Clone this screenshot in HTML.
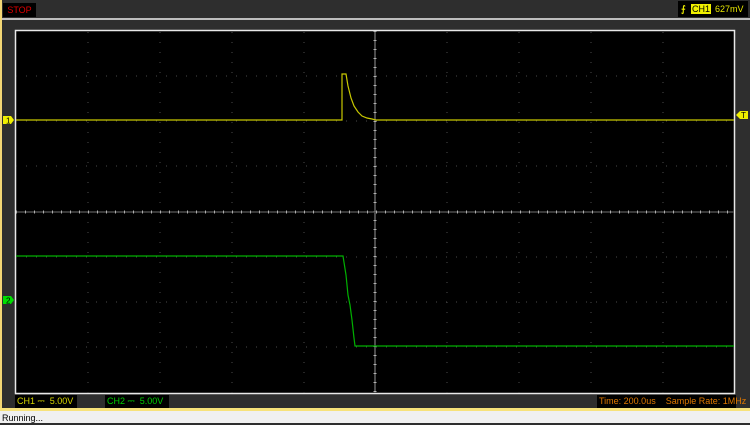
<!DOCTYPE html>
<html><head><style>
body{margin:0;width:750px;height:423px;overflow:hidden;background:#2e2e2e;font-family:"Liberation Sans",sans-serif;position:relative}
.a{position:absolute}
</style></head><body>
<div class="a" style="left:0;top:0;width:2px;height:411px;background:#f3d774"></div>
<div class="a" style="left:3px;top:3px;width:33px;height:14px;background:#000;color:#e00000;font-size:9px;line-height:14px;text-align:center">STOP</div>
<div class="a" style="left:2px;top:18px;width:748px;height:2px;background:#bdbdbd"></div>
<div class="a" style="left:678px;top:1px;width:70px;height:16px;background:#000;font-size:9px;line-height:16px;color:#e8e800">
<span style="position:absolute;left:3px;top:0;font-weight:bold">⨍</span>
<span style="position:absolute;left:13px;top:3px;background:#f0f000;color:#000;line-height:10px;padding:0 1px">CH1</span>
<span style="position:absolute;left:37px">627mV</span></div>
<svg class="a" style="left:0;top:0" width="750" height="423">
<rect x="15.5" y="30.5" width="719" height="363" fill="#000" stroke="#e8e8e8" stroke-width="1.5"/>
<g stroke="#4a4a4a" stroke-width="1" stroke-dasharray="1 9">
<line x1="88" y1="32" x2="88" y2="393"/><line x1="160" y1="32" x2="160" y2="393"/><line x1="232" y1="32" x2="232" y2="393"/><line x1="304" y1="32" x2="304" y2="393"/><line x1="447" y1="32" x2="447" y2="393"/><line x1="519" y1="32" x2="519" y2="393"/><line x1="591" y1="32" x2="591" y2="393"/><line x1="663" y1="32" x2="663" y2="393"/>
<line x1="16" y1="76" x2="734" y2="76"/><line x1="16" y1="121" x2="734" y2="121"/><line x1="16" y1="166" x2="734" y2="166"/><line x1="16" y1="257" x2="734" y2="257"/><line x1="16" y1="302" x2="734" y2="302"/><line x1="16" y1="347" x2="734" y2="347"/>
</g>
<line x1="375" y1="31" x2="375" y2="393" stroke="#4c4c4c" stroke-width="2"/>
<line x1="375" y1="31" x2="375" y2="393" stroke="#b0b0b0" stroke-width="3" stroke-dasharray="1 8"/>
<line x1="16" y1="212" x2="734" y2="212" stroke="#4c4c4c" stroke-width="1.5"/>
<line x1="16" y1="212" x2="734" y2="212" stroke="#b0b0b0" stroke-width="3" stroke-dasharray="1 8"/>
<polyline fill="none" stroke="#c8c800" stroke-width="1.2" points="16,120 342,120 342,74 346,74 348,86 351,98 354,106 358,112 362,116 367,118 372,119 376,120 734,120"/>
<polyline fill="none" stroke="#00b000" stroke-width="1.2" points="16,256 343,256 346,275 348,295 350,305 352,320 354,338 355,346 734,346"/>
<polygon points="3,116 11,116 14,120 11,124 3,124" fill="#f0f000"/>
<text x="6" y="123.5" font-size="8" fill="#000" font-family="Liberation Sans">1</text>
<polygon points="3,296 11,296 14,300 11,304 3,304" fill="#00e000"/>
<text x="6" y="303.5" font-size="8" fill="#000" font-family="Liberation Sans">2</text>
<polygon points="736,115 740,111 748,111 748,119 740,119" fill="#f0f000"/>
<text x="741" y="118" font-size="8" fill="#000" font-family="Liberation Sans">T</text>
</svg>
<div class="a" style="left:15px;top:395px;width:60px;height:13px;background:#000;color:#d8d800;font-size:9px;line-height:13px;padding-left:2px">CH1 ⎓ &nbsp;5.00V</div>
<div class="a" style="left:105px;top:395px;width:62px;height:13px;background:#000;color:#00d000;font-size:9px;line-height:13px;padding-left:2px">CH2 ⎓ &nbsp;5.00V</div>
<div class="a" style="left:597px;top:395px;width:137px;height:13px;background:#000;color:#e07800;font-size:9px;line-height:13px;padding-left:2px;white-space:nowrap">Time: 200.0us &nbsp;&nbsp;&nbsp;Sample Rate: 1MHz</div>
<div class="a" style="left:0;top:408px;width:750px;height:3px;background:#f7e27a"></div>
<div class="a" style="left:0;top:411px;width:750px;height:12px;background:#f0f0f0;color:#000;font-size:9px;line-height:14px;padding-left:2px">Running...</div>
</body></html>
